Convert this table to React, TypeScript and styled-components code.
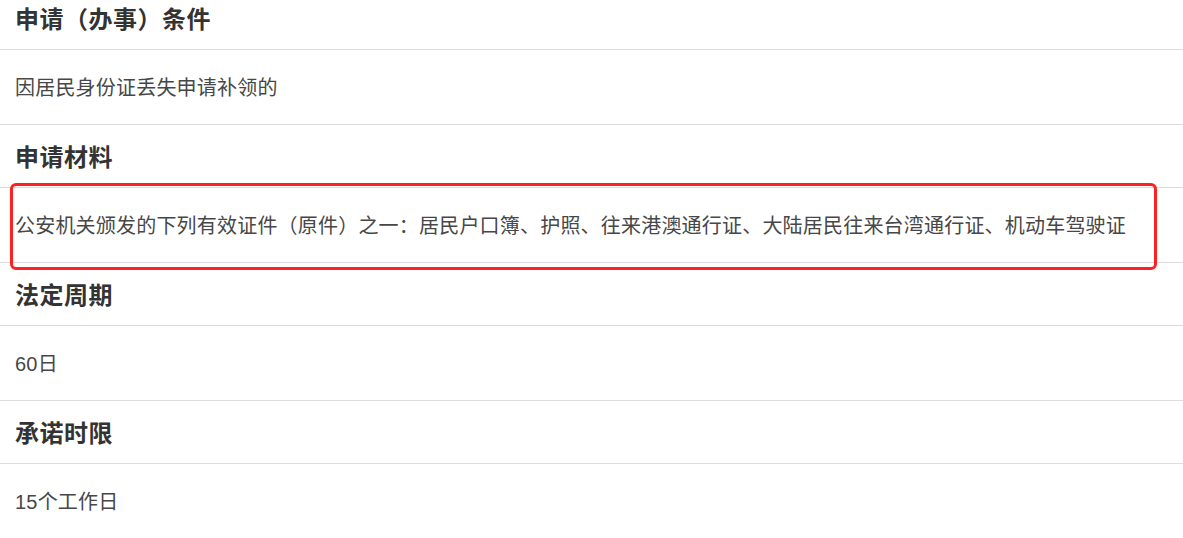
import React from 'react';
import styled, { createGlobalStyle } from 'styled-components';

const GlobalStyle = createGlobalStyle`
  html, body {
    margin: 0;
    padding: 0;
    background: #fff;
    overflow: hidden;
  }
  body {
    font-family: "Liberation Sans", "Noto Sans CJK SC", sans-serif;
  }
`;

const Page = styled.div`
  width: 1183px;
  margin-top: -13.5px;
`;

const Heading = styled.div`
  height: 63.5px;
  box-sizing: border-box;
  border-bottom: 1px solid #dcdcdc;
  display: flex;
  align-items: center;
  padding: 0 15px;
  font-size: 24px;
  font-weight: 700;
  letter-spacing: 0.5px;
  color: #333;
`;

const Body = styled.div`
  position: relative;
  height: 74.5px;
  box-sizing: border-box;
  border-bottom: 1px solid #dcdcdc;
  display: flex;
  align-items: center;
  padding: 0 15px;
  font-size: 20px;
  letter-spacing: 0.2px;
  color: #474747;
`;

// red annotation frame drawn over the row
const Highlight = styled.div`
  position: absolute;
  top: -5px;
  left: 10px;
  width: 1147px;
  height: 87px;
  box-sizing: border-box;
  border: 3px solid #ff2020;
  border-radius: 6px;
  pointer-events: none;
`;

type Section = { title: string; text: string; marked?: boolean };

const sections: Section[] = [
  { title: '申请（办事）条件', text: '因居民身份证丢失申请补领的' },
  {
    title: '申请材料',
    text: '公安机关颁发的下列有效证件（原件）之一：居民户口簿、护照、往来港澳通行证、大陆居民往来台湾通行证、机动车驾驶证',
    marked: true,
  },
  { title: '法定周期', text: '60日' },
  { title: '承诺时限', text: '15个工作日' },
];

const App: React.FC = () => {
  return (
    <>
      <GlobalStyle />
      <Page>
        {sections.map((s) => (
          <React.Fragment key={s.title}>
            <Heading>{s.title}</Heading>
            <Body>
              {s.text}
              {s.marked && <Highlight />}
            </Body>
          </React.Fragment>
        ))}
      </Page>
    </>
  );
};

export default App;
